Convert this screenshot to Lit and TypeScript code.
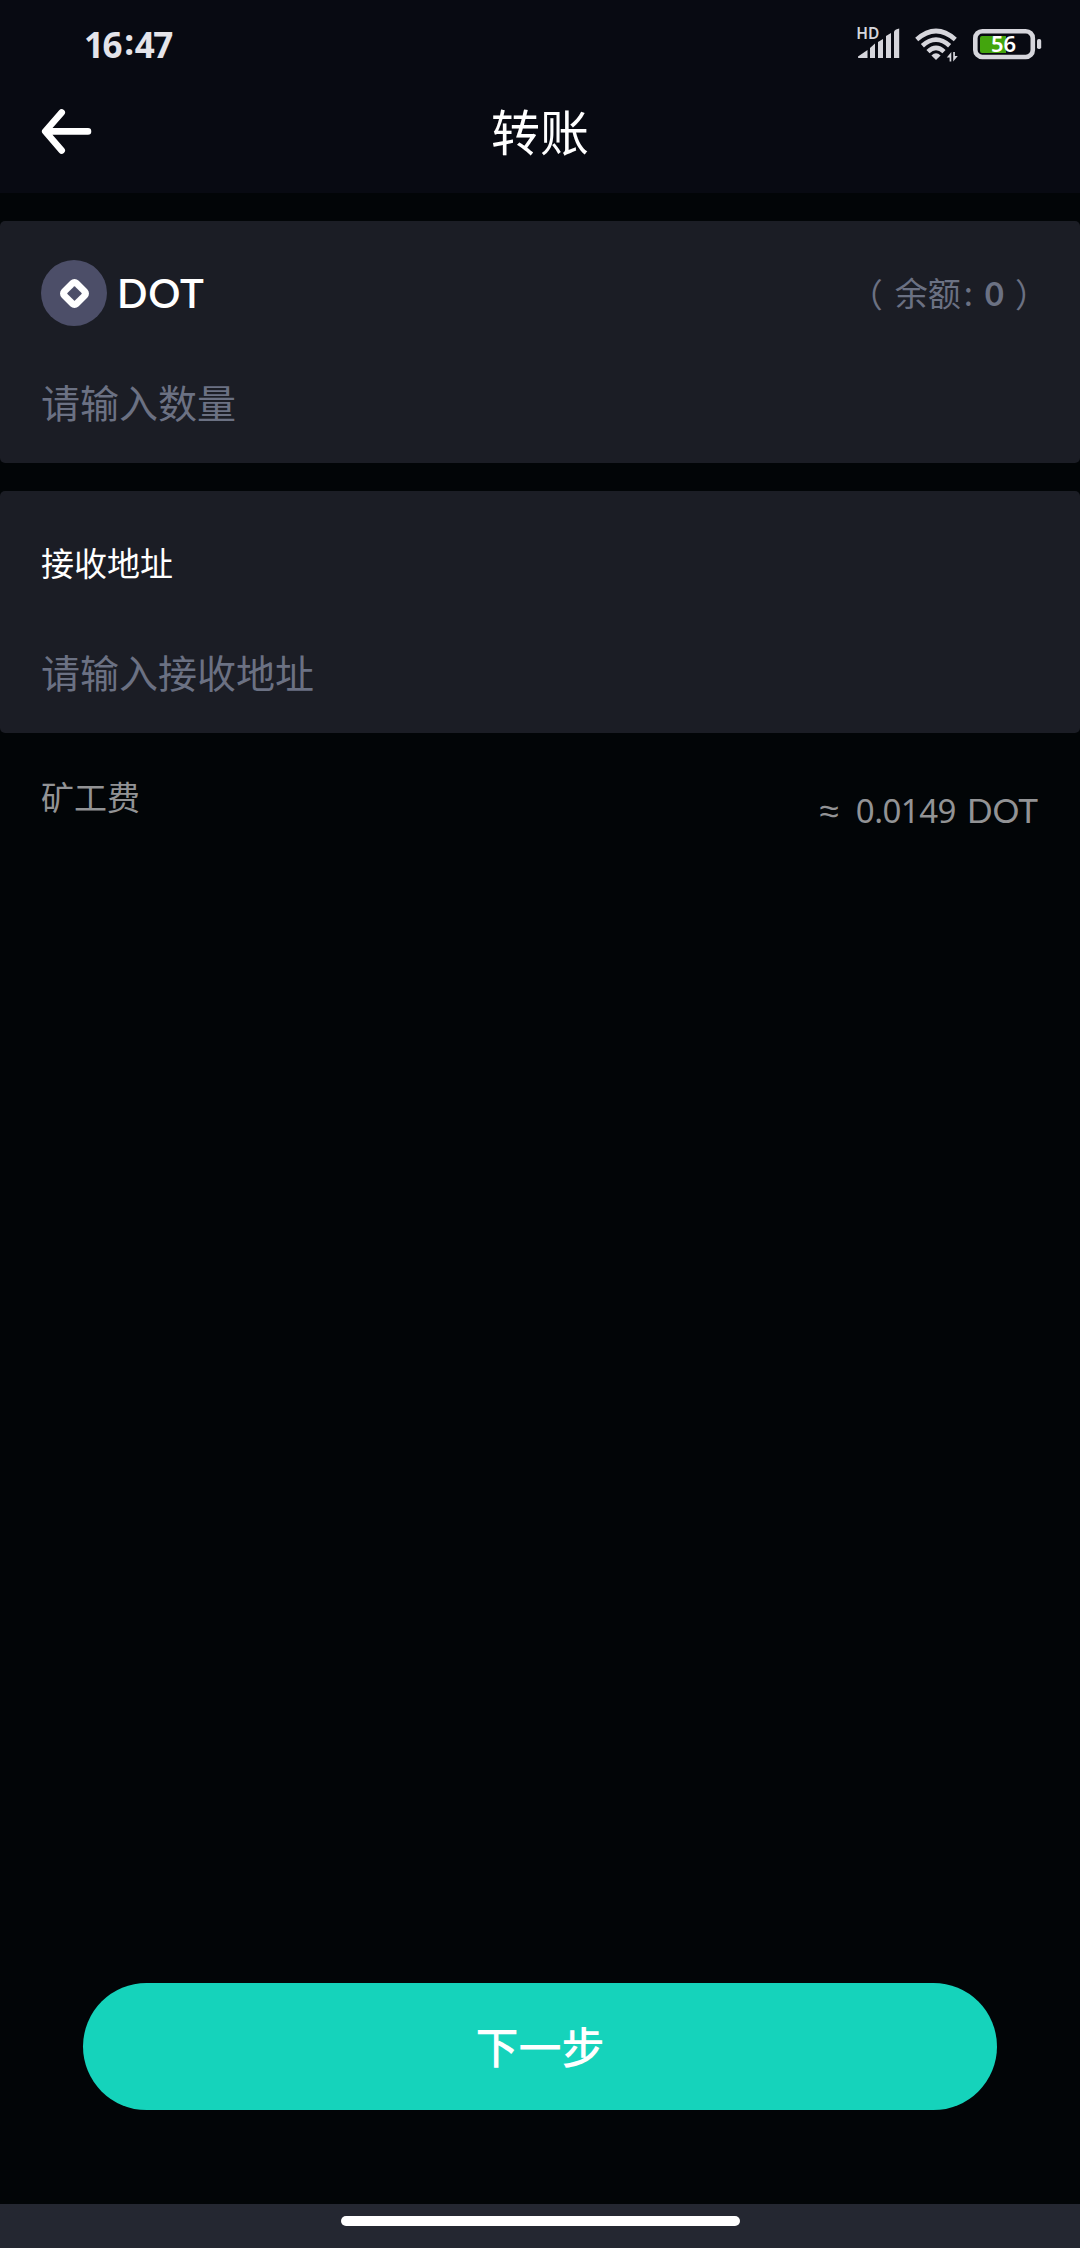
import { LitElement, html, css } from "lit";
import { customElement, property } from "lit/decorators.js";

@customElement("status-bar")
class StatusBar extends LitElement {
  @property() hours = "16";
  @property() minutes = "47";
  @property() battery = "56";

  static styles = css`
    :host {
      display: flex;
      justify-content: space-between;
      align-items: flex-start;
      height: 80px;
      padding: 0 38px 0 84px;
      box-sizing: border-box;
      color: #e4e4ea;
    }
    .time {
      display: flex;
      font: 700 35px/40px "Noto Sans", sans-serif;
      letter-spacing: -1.4px;
      padding-top: 25px;
    }
    .colon {
      margin: -3px 2px 0 3px;
    }
    .icons {
      display: block;
      width: 187px;
      height: 80px;
    }
    .hd {
      font: 600 15.5px "Noto Sans", sans-serif;
      fill: #d6d6dc;
    }
    .level {
      font: 600 22px "Noto Sans", sans-serif;
      fill: #fff;
    }
  `;

  render() {
    return html`
      <div class="time">
        <span>${this.hours}</span><span class="colon">:</span><span>${this.minutes}</span>
      </div>
      <svg class="icons" viewBox="855 0 187 80">
        <text class="hd" x="856.3" y="39">HD</text>
        <g fill="#d6d6dc">
          <path d="M858 56.5 L867.5 50 V58 H859 Q857.5 58 858 56.5Z" />
          <path d="M870 48 L875 43.5 V58 H870Z" />
          <path d="M878 42 L883 39 V58 H878Z" />
          <path d="M886 36 L891 33 V58 H886Z" />
          <path d="M894 32 Q894 30.5 896 29.5 L899.2 28.5 V58 H894Z" />
          <path d="M936 60 L931.4 55.4 Q936 51 940.6 55.4Z" />
          <path d="M951.3 52 V61.5 H949.6 V57.6 H946.8Z" />
          <path d="M953.2 61.5 V52 H954.9 V56 H957.8Z" />
          <rect x="1037" y="39" width="4.2" height="10" rx="1.8" />
        </g>
        <g fill="none" stroke="#d6d6dc" stroke-width="4.6">
          <path d="M916.7 39.5 Q936 22.5 955.3 39.5" />
          <path d="M922.4 45.8 Q936 33.6 949.6 45.8" />
          <path d="M928 51.6 Q936 44.2 944 51.6" />
        </g>
        <rect x="975.3" y="31.2" width="57.5" height="25.8" rx="7" fill="none" stroke="#d6d6dc" stroke-width="4.6" />
        <path d="M982 36 H1006 V53 H982 Q980 53 980 51 V38 Q980 36 982 36Z" fill="#43a50d" />
        <text class="level" x="991" y="52.3">${this.battery}</text>
      </svg>
    `;
  }
}

@customElement("app-root")
class AppRoot extends LitElement {
  static styles = css`
    :host {
      display: flex;
      flex-direction: column;
      height: 2248px;
      background: #020507;
      color: #fff;
      font-family: Lato, "Noto Sans CJK SC", sans-serif;
      overflow: hidden;
    }
    .header {
      height: 193px;
      background: #080a12;
    }
    .nav {
      display: grid;
      grid-template-columns: 180px 1fr 180px;
      align-items: center;
      height: 102px;
    }
    .back {
      display: block;
      width: 60px;
      height: 60px;
      margin-left: 36px;
    }
    .title {
      padding-bottom: 3px;
      text-align: center;
      font: 400 49px/60px "Noto Sans CJK SC", sans-serif;
    }
    .cards {
      display: flex;
      flex-direction: column;
      gap: 28px;
      padding-top: 28px;
    }
    .card {
      display: flex;
      flex-direction: column;
      height: 242px;
      padding: 0 41px;
      box-sizing: border-box;
      border-radius: 5px;
      background: #1b1d25;
    }
    .row {
      display: flex;
      align-items: center;
      height: 144px;
    }
    .coin {
      width: 66px;
      height: 66px;
    }
    .symbol {
      margin-left: 10px;
      font: 600 40px/48px Lato, sans-serif;
      letter-spacing: 0.8px;
    }
    .balance {
      display: flex;
      align-items: center;
      margin: 0 -9px 0 auto;
      color: #6b7183;
      font: 400 33px/48px "Noto Sans CJK SC", sans-serif;
    }
    .open {
      margin-right: 12px;
    }
    .caption {
      padding-bottom: 2px;
    }
    .mark {
      margin-left: 3px;
    }
    .amount {
      margin: 0 11px 0 12px;
      font: 700 33px/48px Lato, sans-serif;
    }
    .label {
      padding-bottom: 3px;
      font: 400 33px/48px "Noto Sans CJK SC", sans-serif;
    }
    .placeholder {
      color: #6b7183;
      font: 400 39px/72px "Noto Sans CJK SC", sans-serif;
    }
    .fee {
      display: flex;
      justify-content: space-between;
      align-items: flex-start;
      padding: 39px 42px 0 41px;
      color: #929395;
    }
    .value {
      display: flex;
      padding-top: 14px;
      font: 400 33.5px/48px Lato, sans-serif;
    }
    .approx {
      margin-right: 17px;
      font: 400 35px/48px "Noto Sans", sans-serif;
    }
    .number {
      margin-right: 11px;
      padding-top: 1px;
      font: 400 33px/48px "Noto Sans", sans-serif;
      letter-spacing: -0.5px;
    }
    .action {
      display: flex;
      justify-content: center;
      height: 127px;
      margin: auto 83px 94px;
      border-radius: 64px;
      background: #15d3bb;
      font: 500 43px/124px "Noto Sans CJK SC", sans-serif;
    }
    .gesture {
      display: flex;
      justify-content: center;
      height: 44px;
      padding-top: 12px;
      box-sizing: border-box;
      background: #242731;
    }
    .handle {
      width: 399px;
      height: 10px;
      border-radius: 5px;
      background: #fff;
    }
  `;

  render() {
    return html`
      <div class="header">
        <status-bar></status-bar>
        <div class="nav">
          <svg class="back" viewBox="36 101 60 60" fill="none" stroke="#fff" stroke-width="6.6"
            stroke-linecap="round" stroke-linejoin="round">
            <path d="M61.7 112.5 L45.2 131.4 L61.7 150.5 M46 131.4 H88" />
          </svg>
          <div class="title">转账</div>
        </div>
      </div>
      <div class="cards">
        <div class="card">
          <div class="row">
            <svg class="coin" viewBox="-33 -33 66 66">
              <circle r="33" fill="#4c4e68" />
              <g transform="translate(.5 .5) rotate(45)">
                <rect x="-12" y="-12" width="24" height="24" rx="6" fill="#fff" />
                <rect x="-5.3" y="-5.3" width="10.6" height="10.6" rx=".6" fill="#4c4e68" />
              </g>
            </svg>
            <span class="symbol">DOT</span>
            <div class="balance">
              <span class="open">（</span><span class="caption">余额<span class="mark">:</span></span><span class="amount">0</span><span>）</span>
            </div>
          </div>
          <div class="placeholder">请输入数量</div>
        </div>
        <div class="card">
          <div class="row"><span class="label">接收地址</span></div>
          <div class="placeholder">请输入接收地址</div>
        </div>
      </div>
      <div class="fee">
        <span class="label">矿工费</span>
        <div class="value"><span class="approx">≈</span><span class="number">0.0149</span><span>DOT</span></div>
      </div>
      <div class="action">下一步</div>
      <div class="gesture"><div class="handle"></div></div>
    `;
  }
}
